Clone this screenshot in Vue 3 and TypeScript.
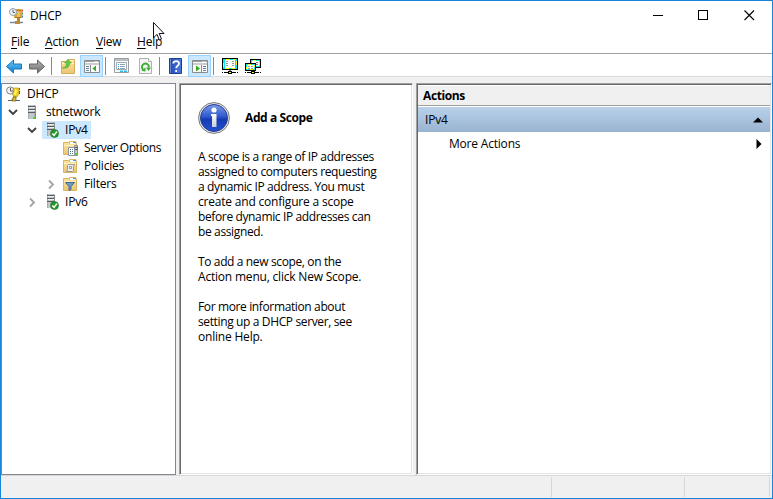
<script setup lang="ts">
interface TreeRow {
  label: string
  level: number
  icon: 'dhcp' | 'server' | 'checked' | 'options' | 'policies' | 'filters'
  arrow?: 'open' | 'closed'
  selected?: boolean
}

interface Line {
  text: string
  tight?: boolean
}

const menus: string[] = ['File', 'Action', 'View', 'Help']

const rows: TreeRow[] = [
  { label: 'DHCP', level: 0, icon: 'dhcp' },
  { label: 'stnetwork', level: 1, icon: 'server', arrow: 'open' },
  { label: 'IPv4', level: 2, icon: 'checked', arrow: 'open', selected: true },
  { label: 'Server Options', level: 3, icon: 'options' },
  { label: 'Policies', level: 3, icon: 'policies' },
  { label: 'Filters', level: 3, icon: 'filters', arrow: 'closed' },
  { label: 'IPv6', level: 2, icon: 'checked', arrow: 'closed' },
]

const paragraphs: Line[][] = [
  [
    { text: 'A scope is a range of IP addresses', tight: true },
    { text: 'assigned to computers requesting', tight: true },
    { text: 'a dynamic IP address. You must', tight: true },
    { text: 'create and configure a scope' },
    { text: 'before dynamic IP addresses can', tight: true },
    { text: 'be assigned.', tight: true },
  ],
  [{ text: 'To add a new scope, on the', tight: true }, { text: 'Action menu, click New Scope.' }],
  [
    { text: 'For more information about', tight: true },
    { text: 'setting up a DHCP server, see', tight: true },
    { text: 'online Help.' },
  ],
]
</script>

<template>
  <div class="window">
    <svg class="defs" width="0" height="0">
      <defs>
        <linearGradient id="gBlue" x1="0" y1="0" x2="0" y2="1"><stop offset="0" stop-color="#6cc6f5" /><stop offset="1" stop-color="#0c7fd0" /></linearGradient>
        <linearGradient id="gGray" x1="0" y1="0" x2="0" y2="1"><stop offset="0" stop-color="#b5b5b5" /><stop offset="1" stop-color="#707070" /></linearGradient>
        <linearGradient id="gFolder" x1="0" y1="0" x2="0" y2="1"><stop offset="0" stop-color="#fbe3a0" /><stop offset="1" stop-color="#ebc672" /></linearGradient>
        <linearGradient id="gInfo" x1="0" y1="0" x2="0" y2="1"><stop offset="0" stop-color="#7d9be8" /><stop offset=".45" stop-color="#3058cf" /><stop offset=".55" stop-color="#163bb4" /><stop offset="1" stop-color="#2450cf" /></linearGradient>
        <linearGradient id="gStem" x1="0" y1="0" x2="0" y2="1"><stop offset="0" stop-color="#fff" /><stop offset="1" stop-color="#c9ccd4" /></linearGradient>
        <linearGradient id="gHelp" x1="0" y1="0" x2="1" y2="0"><stop offset="0" stop-color="#1c3a92" /><stop offset=".25" stop-color="#2f57bd" /><stop offset="1" stop-color="#4a7ae0" /></linearGradient>
        <g id="server">
          <path d="M4 1h7l1 1v13H4z" fill="#a9aeb1" />
          <path d="M5 1h5v14H5z" fill="#c3c7c9" />
          <path d="M4 2.500h7M4 5.500h7M4 8.500h7" stroke="#565e62" />
          <path d="M5 3.500h6M5 6.500h6" stroke="#eef0f0" />
          <path d="M11.500 2v13" stroke="#858c90" />
          <path d="M9 13h2v2H9z" fill="#46e116" />
        </g>
        <g id="folder">
          <path d="M1.500 14.500v-12h5l1 1h7v11z" fill="url(#gFolder)" stroke="#dbb462" />
          <path d="M7.500 4v-2.500h6.500v2.500" fill="#fff" stroke="#dfb860" />
          <path d="M11 2.500h3" stroke="#39a4e8" />
          <path d="M2 5.500h12" stroke="#fff0bd" />
        </g>
      </defs>
    </svg>

    <header class="titlebar">
      <svg class="app-icon" width="16" height="16" viewBox="0 0 16 16">
        <path d="M5 1h8v9H5z" fill="#e2a53a" />
        <path d="M6 2.500h6M6 9.500h6" stroke="#ad741c" />
        <path d="M9.500 3v6" stroke="#f3c86c" stroke-width="2" />
        <path d="M13.500 1.500v2" stroke="#d64a32" /><path d="M13.500 4.500v2" stroke="#43a047" /><path d="M13.500 7.500v2" stroke="#2f74b8" />
        <path d="M8 10h3v3H8z" fill="#bb852d" />
        <path d="M1 14.500h13" stroke="#76889a" stroke-width="1.500" />
        <path d="M6 13h5v3H6z" fill="#b88b3b" />
        <circle cx="4" cy="4" r="3.500" fill="#edf3f8" stroke="#91a0ae" />
        <path d="M4 1.800v2.700h2" fill="none" stroke="#526878" />
      </svg>
      <span class="title">DHCP</span>
      <svg class="controls" width="138" height="29" viewBox="0 0 138 29">
        <path d="M18 14.500h10" stroke="#000" />
        <rect x="63.500" y="9.500" width="9" height="9" fill="none" stroke="#000" />
        <path d="M109.500 9.500l9.500 9.500M119 9.500l-9.500 9.500" stroke="#000" stroke-width="1.100" />
      </svg>
    </header>

    <nav class="menubar">
      <span v-for="m in menus" :key="m" class="menu" :class="m.toLowerCase()"><u>{{ m[0] }}</u>{{ m.slice(1) }}</span>
    </nav>

    <div class="toolbar">
      <svg width="280" height="22" viewBox="0 0 280 22">
        <path d="M5.500 12.500l7-6.500v4h8v5h-8v4z" fill="url(#gBlue)" stroke="#1679b9" />
        <path d="M43.500 12.500l-7-6.500v4h-8v5h8v4z" fill="url(#gGray)" stroke="#666" />
        <path d="M50.500 3v18M104.500 3v18M158.500 3v18M212.500 3v18" stroke="#8a8a8a" />

        <path d="M60.500 19.500v-12h5l1-2h7v14z" fill="url(#gFolder)" stroke="#d4ac5c" />
        <path d="M67 6.500h6M61 9.500h12" stroke="#fff5cd" />
        <path d="M61.500 14c3-.5 4-2 4-5h-2l3.500-3.500L70.500 9h-2c0 4-2 5.500-7 5z" fill="#6bcb3c" stroke="#42a12f" stroke-width=".6" />

        <rect x="79.500" y="1.500" width="22" height="21" fill="#cce8ff" stroke="#99d1ff" />
        <g transform="translate(83 6)">
          <path d="M.5.5h15v12H.5z" fill="#fafafa" stroke="#858b8f" />
          <path d="M1 1.500h14M1 4h14" stroke="#9ba0a3" />
          <path d="M10.500 1.500h1M12.500 1.500h1" stroke="#fff" />
          <path d="M6.500 5v8" stroke="#858b8f" />
          <path d="M2 6.500h3M2 8.500h3M2 10.500h3" stroke="#6184a2" />
          <path d="M12 5.500v6L8.500 8.500z" fill="#35a822" />
        </g>
        <g transform="translate(113 4)">
          <path d="M.5.5h14v14H.5z" fill="#f8f9fa" stroke="#989da1" />
          <path d="M1 2h13" stroke="#b7bdc1" stroke-width="2" />
          <path d="M2.500 4.500h10v7h-10z" fill="#fff" stroke="#a0adb8" />
          <path d="M4 6.500h1M4 8.500h1M4 10.500h1" stroke="#299bdd" />
          <path d="M6 6.500h5M6 8.500h5M6 10.500h5" stroke="#94a1ac" />
          <path d="M6 13.200h3M10 13.200h3" stroke="#28bceb" stroke-width="1.500" />
        </g>
        <g transform="translate(138 4)">
          <path d="M.5.5h9l3 3v12H.5z" fill="#f4f4f4" stroke="#b0b0b0" />
          <path d="M9.500.5v3h3" fill="#fff" stroke="#b0b0b0" />
          <path d="M4.300 11.800a3.500 3.500 0 1 1 5.600-2.500" fill="none" stroke="#3cad2f" stroke-width="1.900" />
          <path d="M7 9.500h5l-2.500 3.500zM2.500 12.800l4-3.300v4z" fill="#3cad2f" />
        </g>
        <g transform="translate(168 4)">
          <path d="M.5.5h12v15H.5z" fill="url(#gHelp)" stroke="#203f91" />
          <path d="M1.500 1v14" stroke="#6d8bd4" />
          <path d="M4.300 5.500c.2-3.200 5.900-3.200 5.700.2-.1 2-2.800 2-2.800 4.600M7.200 12v2" fill="none" stroke="#fff" stroke-width="1.800" />
        </g>
        <rect x="187.500" y="1.500" width="22" height="21" fill="#cce8ff" stroke="#99d1ff" />
        <g transform="translate(191 6)">
          <path d="M.5.5h15v12H.5z" fill="#fafafa" stroke="#858b8f" />
          <path d="M1 1.500h14M1 4h14" stroke="#9ba0a3" />
          <path d="M10.500 1.500h1M12.500 1.500h1" stroke="#fff" />
          <path d="M9.500 5v8" stroke="#858b8f" />
          <path d="M11 6.500h3M11 8.500h3M11 10.500h3" stroke="#6184a2" />
          <path d="M4 5.500v6l4-3z" fill="#35a822" />
        </g>
        <g transform="translate(221 4)">
          <path d="M0 0h16v12H0z" fill="#000" />
          <path d="M1 1h14v10H1z" fill="#0ee" />
          <path d="M4 1h4v1H4zM11 1h3v1h-3zM1 5h1v4H1zM14 3h1v4h-1zM3 10h4v1H3zM10 10h3v1h-3z" fill="#ff0" />
          <path d="M3 2h10v8H3z" fill="#fff" />
          <path d="M4 3.500h2M4 5.500h2M4 7.500h2M10 3.500h2M10 5.500h2M10 7.500h2" stroke="#999" />
          <path d="M8 12v2M0 14.500h1M2 14.500h12M15 14.500h1" stroke="#000" />
          <path d="M6 13h4v3H6z" fill="#000" /><path d="M7 14h2v1H7z" fill="#ff0" />
        </g>
        <g transform="translate(244 5)">
          <path d="M5 0h11v9H5z" fill="#000" />
          <path d="M6 1h9v7H6z" fill="#0ee" />
          <path d="M7 2h7v5H7z" fill="#fff" />
          <path d="M8 1h3v1H8zM14 3h1v3h-1z" fill="#ff0" />
          <path d="M11 3.500h2M11 5.500h2" stroke="#777" />
          <path d="M0 4h11v8H0z" fill="#000" />
          <path d="M1 5h9v6H1z" fill="#0ee" />
          <path d="M2 6h7v4H2z" fill="#fff" />
          <path d="M3 5h3v1H3zM1 8h1v2H1zM9 6h1v2H9zM5 10h3v1H5z" fill="#ff0" />
          <path d="M3 7.500h2M6 7.500h2M3 9.500h2M6 9.500h2" stroke="#999" />
          <path d="M8 11v2M0 13.500h1M2 13.500h12M15 13.500h1" stroke="#000" />
          <path d="M6 12h4v3H6z" fill="#000" /><path d="M7 13h2v1H7z" fill="#ff0" />
        </g>
      </svg>
    </div>

    <main class="panes">
      <section class="tree">
        <div v-for="r in rows" :key="r.label" class="row" :class="'level-' + r.level">
          <span class="twisty">
            <svg v-if="r.arrow" width="12" height="12" viewBox="0 0 12 12">
              <path v-if="r.arrow === 'open'" d="M2 4l4 4 4-4" fill="none" stroke="#404040" stroke-width="1.900" />
              <path v-else d="M4 2.500l4 4-4 4" fill="none" stroke="#a6a6a6" stroke-width="1.900" />
            </svg>
          </span>
          <span class="node" :class="{ selected: r.selected }">
            <svg width="16" height="16" viewBox="0 0 16 16">
              <template v-if="r.icon === 'dhcp'">
                <path d="M6 2h7v6l-2 3H8L6 8z" fill="#f1cf21" stroke="#a68918" stroke-width=".6" />
                <path d="M9.500 3v6M8 8l3-3" stroke="#fff36c" stroke-width="1.300" />
                <path d="M13.500 2v2" stroke="#d63d28" /><path d="M13.500 5v3" stroke="#665713" />
                <path d="M2 14.500h12" stroke="#59656b" />
                <path d="M7 11h3v4H6v-2h1z" fill="#dfba22" stroke="#4c451b" stroke-width=".6" />
                <circle cx="4.200" cy="4.500" r="3.600" fill="#f1f1f1" stroke="#858585" />
                <path d="M4.500 2v3H7" fill="none" stroke="#555" />
              </template>
              <use v-else-if="r.icon === 'server'" href="#server" x="-1" />
              <template v-else-if="r.icon === 'checked'">
                <use href="#server" x="-1" y="-1" />
                <circle cx="10.500" cy="11.500" r="4" fill="#26972a" stroke="#176e1d" stroke-width=".6" />
                <path d="M8.300 11.500l1.700 2 3-4" fill="none" stroke="#fff" stroke-width="1.400" />
              </template>
              <template v-else>
                <use href="#folder" x="-1" />
                <template v-if="r.icon === 'options'">
                  <path d="M5.500 7.500h6v8h-6z" fill="#fff" stroke="#8998a5" />
                  <path d="M7 9.500h1M9 9.500h1M7 11.500h1M9 11.500h1M7 13.500h1M9 13.500h1" stroke="#567487" />
                  <path d="M11.500 5.500h3v10h-3z" fill="#c3c8ca" stroke="#8b9296" />
                  <path d="M12 7.500h3M12 9.500h3" stroke="#555d61" /><path d="M12 13h2v2h-2z" fill="#46e116" />
                </template>
                <template v-else-if="r.icon === 'policies'">
                  <path d="M5.500 6.500h6l-1 2v4l-1 1h-6l1-2v-4z" fill="#ececec" stroke="#999" />
                  <path d="M6.500 8.500h2v2h-2z" fill="#fff" stroke="#999" />
                </template>
                <path v-else d="M2.500 6.500h9l-3.500 4v3l-2 1v-4z" fill="#6a9dca" stroke="#456a8a" />
              </template>
            </svg>
            <span class="label" :class="{ tight: r.icon === 'options' }">{{ r.label }}</span>
          </span>
        </div>
      </section>

      <section class="detail">
        <div class="heading">
          <svg width="32" height="32" viewBox="0 0 32 32">
            <circle cx="16" cy="16" r="15.400" fill="#e8e8e8" stroke="#777" />
            <circle cx="16" cy="16" r="13.500" fill="url(#gInfo)" stroke="#253f96" />
            <circle cx="16" cy="8" r="2.600" fill="#fff" />
            <path d="M13 12h5.500v13H14V14h-1z" fill="url(#gStem)" />
          </svg>
          <h1>Add a Scope</h1>
        </div>
        <p v-for="(p, i) in paragraphs" :key="i">
          <span v-for="line in p" :key="line.text" class="line" :class="{ tight: line.tight }">{{ line.text }}</span>
        </p>
      </section>

      <section class="actions">
        <div class="actions-title">Actions</div>
        <div class="actions-group">
          <span>IPv4</span>
          <svg width="10" height="6" viewBox="0 0 10 6"><path d="M0 5.500L5 .5l5 5z" fill="#000" /></svg>
        </div>
        <div class="action-item">
          <span>More Actions</span>
          <svg width="6" height="10" viewBox="0 0 6 10"><path d="M.5 0l5 5-5 5z" fill="#000" /></svg>
        </div>
      </section>
    </main>

    <footer class="statusbar"><span class="cell main"></span><span class="cell mid"></span><span class="cell end"></span></footer>

    <svg class="cursor" width="13" height="21" viewBox="0 0 13 21">
      <path d="M1.500 1.500v15.300l3.500-3.400 2.300 5.600 2.200-1-2.300-5.500h4.800z" fill="#fff" stroke="#10101c" />
    </svg>
  </div>
</template>

<style>
body {
  margin: 0;
  overflow: hidden;
}
</style>

<style scoped>
.window {
  position: relative;
  display: flex;
  flex-direction: column;
  box-sizing: border-box;
  width: 773px;
  height: 499px;
  border: 1px solid #1883d7;
  background: #fff;
  color: #000;
  font: 12px/15px "Open Sans", "Noto Sans", sans-serif;
  letter-spacing: -0.2px;
  white-space: nowrap;
}
svg {
  display: block;
  flex: none;
}
.defs {
  position: absolute;
}
.titlebar {
  display: flex;
  align-items: center;
  height: 29px;
  padding-left: 8px;
}
.title {
  margin-left: 5px;
}
.controls {
  margin-left: auto;
  margin-right: -1px;
}
.menubar {
  display: flex;
  align-items: center;
  height: 23px;
  padding-left: 10px;
}
.menu u {
  text-underline-offset: 2px;
  text-decoration-thickness: 1px;
}
.file { width: 34px; }
.action { width: 51px; }
.view { width: 41px; }
.toolbar {
  height: 22px;
  border-top: 1px solid #a0a0a5;
  border-bottom: 1px solid #d9d9d9;
}
.toolbar svg {
  overflow: visible;
}
.panes {
  display: flex;
  flex: 1;
  padding-top: 6px;
  background: #f0f0f0;
}
.tree {
  box-sizing: border-box;
  width: 175px;
  margin-right: 3px;
  padding-top: 1px;
  border: 1px solid #828790;
  background: #fff;
}
.row {
  display: flex;
  height: 18px;
}
.level-1 { padding-left: 5px; }
.level-2 { padding-left: 24px; }
.level-3 { padding-left: 43px; }
.twisty {
  display: flex;
  align-items: center;
  width: 16px;
}
.level-0 .twisty { width: 2px; }
.node {
  display: flex;
  align-items: center;
  padding: 0 3px 0 2px;
}
.label {
  margin-left: 5px;
  padding-bottom: 2px;
}
.label.tight {
  letter-spacing: -0.45px;
}
.selected {
  background: #cce8ff;
}
.detail,
.actions {
  box-sizing: border-box;
  border: 1px solid;
  border-color: #a0a0a0 #fff #fff #a0a0a0;
  background: #fff;
  box-shadow: inset 1px 1px #696969, inset -1px -1px #e3e3e3;
}
.detail {
  width: 234px;
  margin-right: 3px;
  padding: 18px 0 0 18px;
}
.heading {
  display: flex;
  align-items: center;
  height: 32px;
  margin-bottom: 15px;
}
h1 {
  margin: 0 0 0 15px;
  padding-bottom: 1px;
  font-size: 12px;
  font-weight: 700;
  line-height: 15px;
  letter-spacing: -0.4px;
}
p {
  margin: 0 0 15px;
}
.line {
  display: block;
}
.line.tight {
  letter-spacing: -0.37px;
}
.actions {
  flex: 1;
  padding: 2px 1px 1px 1px;
}
.actions-title {
  height: 19px;
  padding-left: 5px;
  border-bottom: 1px solid #a0a0a0;
  background: #f0f0f0;
  font-weight: 700;
  line-height: 20px;
  letter-spacing: -0.4px;
}
.actions-group,
.action-item {
  display: flex;
  align-items: center;
  justify-content: space-between;
}
.actions-group {
  height: 25px;
  margin-top: 1px;
  padding: 0 7px;
  background: linear-gradient(#b9d1ea, #99b4d1);
}
.action-item {
  height: 23px;
  padding: 0 8px 0 31px;
}
.statusbar {
  display: flex;
  height: 20px;
  padding: 1px 0 1px;
  border-top: 1px solid #d7d7d7;
  background: #f0f0f0;
}
.cell {
  box-sizing: border-box;
  border-right: 1px solid #d7d7d7;
}
.main { width: 551px; }
.mid { width: 133px; }
.end { width: 85px; }
.cursor {
  position: absolute;
  left: 151px;
  top: 20px;
}
</style>
